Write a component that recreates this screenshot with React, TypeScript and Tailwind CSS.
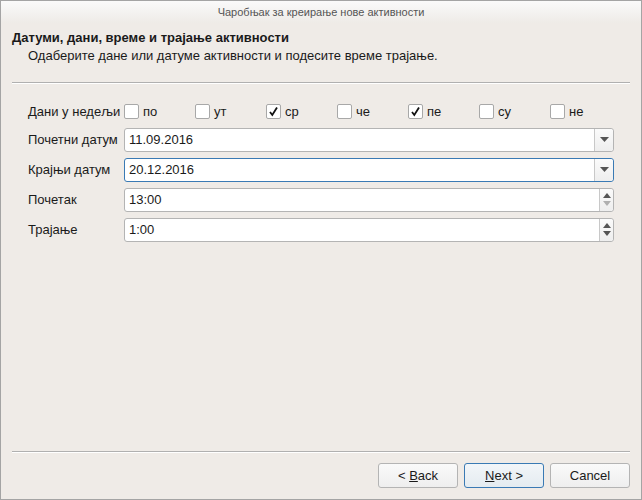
import { ReactNode } from "react";

const days = [
  { label: "по", checked: false },
  { label: "ут", checked: false },
  { label: "ср", checked: true },
  { label: "че", checked: false },
  { label: "пе", checked: true },
  { label: "су", checked: false },
  { label: "не", checked: false },
];

function CheckBox({ label, checked }: { label: string; checked: boolean }) {
  return (
    <div className="flex items-center w-[71px]">
      <div className="w-[15px] h-[15px] bg-white border border-[#a8a8a8] rounded-[2px] flex items-center justify-center">
        {checked && (
          <svg width="11" height="11" viewBox="0 0 11 11">
            <path d="M2 6 L4.3 9 L9 1.5" stroke="#111" strokeWidth="1.8" fill="none" />
          </svg>
        )}
      </div>
      <span className="ml-[4px]">{label}</span>
    </div>
  );
}

function Row({ label, children }: { label: string; children: ReactNode }) {
  return (
    <div className="flex items-center">
      <div className="w-[96px] shrink-0 whitespace-nowrap">{label}</div>
      {children}
    </div>
  );
}

function Combo({ value, focused }: { value: string; focused?: boolean }) {
  return (
    <div
      className={`flex-1 h-[24px] bg-white rounded-[3px] border flex ${
        focused ? "border-[#3a7ab4]" : "border-[#b4b4b4]"
      }`}
    >
      <div className="flex-1 pl-[4px] flex items-center">{value}</div>
      <div className="w-[19px] border-l border-[#c8c8c8] bg-gradient-to-b from-[#fbfbfb] to-[#eeeeee] rounded-r-[3px] flex items-center justify-center">
        <svg width="9" height="5" viewBox="0 0 9 5">
          <path d="M0 0 H9 L4.5 5 Z" fill="#555" />
        </svg>
      </div>
    </div>
  );
}

function Spin({ value, downDisabled }: { value: string; downDisabled?: boolean }) {
  return (
    <div className="flex-1 h-[24px] bg-white rounded-[3px] border border-[#b4b4b4] flex">
      <div className="flex-1 pl-[4px] flex items-center">{value}</div>
      <div className="w-[14px] border-l border-[#c8c8c8] bg-gradient-to-b from-[#fbfbfb] to-[#eeeeee] rounded-r-[3px] flex flex-col items-center justify-center gap-[3px]">
        <svg width="8" height="5" viewBox="0 0 8 5">
          <path d="M0 5 H8 L4 0 Z" fill="#555" />
        </svg>
        <svg width="8" height="5" viewBox="0 0 8 5">
          <path d="M0 0 H8 L4 5 Z" fill={downDisabled ? "#b0b0b0" : "#555"} />
        </svg>
      </div>
    </div>
  );
}

function Btn({ children, def }: { children: ReactNode; def?: boolean }) {
  return (
    <button
      className={`w-[80px] h-[25px] rounded-[3px] border text-[13px] ${
        def
          ? "border-[#3a7ab4] bg-gradient-to-b from-[#f2f6f9] to-[#e4ebf0]"
          : "border-[#b4b4b4] bg-gradient-to-b from-[#fafafa] to-[#eeeeee]"
      }`}
    >
      {children}
    </button>
  );
}

export default function App() {
  return (
    <div
      className="w-[642px] h-[500px] border border-[#a4a4a4] bg-[#efebe7] flex flex-col text-[13px] text-[#1a1a1a]"
      style={{ fontFamily: '"Liberation Sans", Arial, sans-serif' }}
    >
      <div className="h-[22px] bg-gradient-to-b from-[#fafafa] to-[#eeebe7] flex items-center justify-center text-[11px] text-[#555]">
        Чаробњак за креирање нове активности
      </div>

      <div className="px-[11px]">
        <div className="font-bold mt-[6px] leading-[18px]">Датуми, дани, време и трајање активности</div>
        <div className="pl-[16px] leading-[18px]">Одаберите дане или датуме активности и подесите време трајање.</div>
        <div className="mt-[17px] border-t border-[#b0b0b0] border-b border-b-white" />
      </div>

      <div className="pl-[27px] pr-[27px] mt-[18px] flex flex-col gap-[6px]">
        <Row label="Дани у недељи">
          <div className="flex">
            {days.map((d) => (
              <CheckBox key={d.label} label={d.label} checked={d.checked} />
            ))}
          </div>
        </Row>
        <Row label="Почетни датум">
          <Combo value="11.09.2016" />
        </Row>
        <Row label="Крајњи датум">
          <Combo value="20.12.2016" focused />
        </Row>
        <Row label="Почетак">
          <Spin value="13:00" downDisabled />
        </Row>
        <Row label="Трајање">
          <Spin value="1:00" />
        </Row>
      </div>

      <div className="flex-1" />

      <div className="px-[11px]">
        <div className="border-t border-[#b0b0b0] border-b border-b-white" />
        <div className="flex justify-end gap-[6px] mt-[10px] mb-[11px]">
          <Btn>
            &lt; <u>B</u>ack
          </Btn>
          <Btn def>
            <u>N</u>ext &gt;
          </Btn>
          <Btn>Cancel</Btn>
        </div>
      </div>
    </div>
  );
}
